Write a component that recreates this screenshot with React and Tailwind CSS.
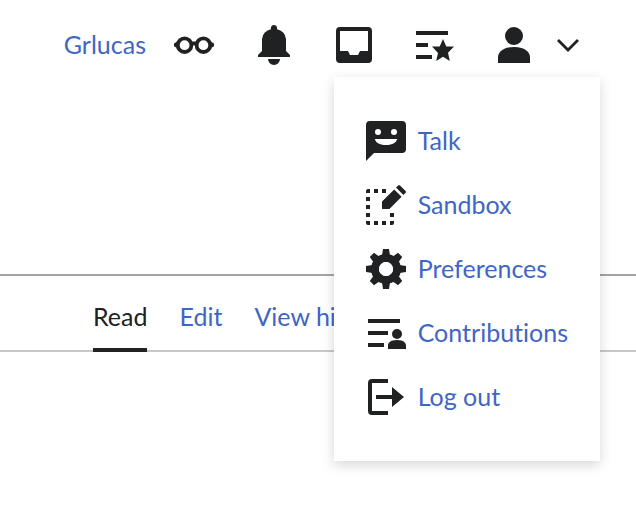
const Icon = ({ children }) => (
    <svg className="w-10 h-10 shrink-0 fill-[#202122]" viewBox="0 0 20 20" aria-hidden="true">
        {children}
    </svg>
);

const GlassesIcon = () => (
    <Icon>
        <g fill="none" stroke="#202122" strokeWidth="1.9">
            <circle cx="5.3" cy="10.1" r="3.4" />
            <circle cx="14.7" cy="10.1" r="3.4" />
            <path d="M8.2 9.5q1.8-.7 3.6 0" />
        </g>
        <path d="M2.4 7.9 0 9.3v1.3l2 1.2zM17.6 7.9l2.4 1.4v1.3l-2 1.2z" />
    </Icon>
);

const BellIcon = () => (
    <Icon>
        <path d="M16 7a5.38 5.38 0 0 0-4.46-4.85C11.6 1.46 11.53 0 10 0S8.4 1.46 8.46 2.15A5.38 5.38 0 0 0 4 7v6l-2 2v1h16v-1l-2-2zm-6 13a3 3 0 0 0 3-3H7a3 3 0 0 0 3 3" />
    </Icon>
);

const TrayIcon = () => (
    <Icon>
        <path d="M3 1a2 2 0 0 0-2 2v14a2 2 0 0 0 2 2h14a2 2 0 0 0 2-2V3a2 2 0 0 0-2-2zm14 12h-4l-1 2H8l-1-2H3V3h14z" />
    </Icon>
);

const WatchlistIcon = () => (
    <Icon>
        <path d="M1 3h16v2H1zm0 6h6v2H1zm0 6h8v2H1zm8-4.24h3.85L14.5 7l1.65 3.76H20l-3 3.17.9 4.05-3.4-2.14L11.1 18l.9-4.05z" />
    </Icon>
);

const UserIcon = () => (
    <Icon>
        <path d="M10 11c-5.92 0-8 3-8 5v3h16v-3c0-2-2.08-5-8-5" />
        <circle cx="10" cy="5.5" r="4.5" />
    </Icon>
);

const TalkIcon = () => (
    <Icon>
        <path
            fillRule="evenodd"
            d="M18 0H2a2 2 0 0 0-2 2v18l4-4h14a2 2 0 0 0 2-2V2a2 2 0 0 0-2-2m-4 4a1.5 1.5 0 1 1 0 3 1.5 1.5 0 0 1 0-3M6 4a1.5 1.5 0 1 1 0 3 1.5 1.5 0 0 1 0-3m4 8c-2.61 0-4.83-.67-5.65-3h11.3c-.82 2.33-3.04 3-5.65 3"
        />
    </Icon>
);

const SandboxIcon = () => (
    <Icon>
        <path d="M2 2v2H0V3a1 1 0 0 1 1-1zM4 2h2v2H4zM8 2h2v2H8zM0 6h2v2H0zM0 10h2v2H0zM0 14h2v2H0zM12 14h2v2h-2zM0 18h2v2H1a1 1 0 0 1-1-1zM4 18h2v2H4zM8 18h2v2H8zM12 18h2v1a1 1 0 0 1-1 1h-1z" />
        <path d="M8 8.3 14.1 2.2l3.7 3.7L11.7 12H8zM15 1.3 16.1.2a.7.7 0 0 1 .9 0L19.8 3a.7.7 0 0 1 0 .9L18.7 5z" />
    </Icon>
);

const SettingsIcon = () => (
    <Icon>
        <g transform="translate(10 10)">
            {[0, 45, 90, 135, 180, 225, 270, 315].map((angle) => (
                <path key={angle} d="M-1.5-10h3l1 6.5h-5" transform={`rotate(${angle})`} />
            ))}
        </g>
        <path d="M10 2.5a7.5 7.5 0 0 0 0 15 7.5 7.5 0 0 0 0-15v4a3.5 3.5 0 0 1 0 7 3.5 3.5 0 0 1 0-7" />
        <circle cx="10" cy="10" r="3.5" className="fill-white" />
    </Icon>
);

const ContributionsIcon = () => (
    <Icon>
        <path d="M1 3h16v2H1zm0 6h10v2H1zm0 6h8v2H1zM15.5 13.5c-3.4 0-4.5 1.6-4.5 2.6V18h9v-1.9c0-1-1.1-2.6-4.5-2.6" />
        <circle cx="15.5" cy="10.5" r="2.5" />
    </Icon>
);

const LogOutIcon = () => (
    <Icon>
        <path d="M3 3h8V1H3a2 2 0 0 0-2 2v14a2 2 0 0 0 2 2h8v-2H3z" />
        <path d="M13 5v4H5v2h8v4l6-5z" />
    </Icon>
);

const tools = [
    { label: "Alerts", icon: BellIcon },
    { label: "Notices", icon: TrayIcon },
    { label: "Watchlist", icon: WatchlistIcon },
];

const menuItems = [
    { label: "Talk", icon: TalkIcon },
    { label: "Sandbox", icon: SandboxIcon },
    { label: "Preferences", icon: SettingsIcon },
    { label: "Contributions", icon: ContributionsIcon },
    { label: "Log out", icon: LogOutIcon },
];

const UserMenu = () => (
    <div className="relative">
        <button className="flex items-center gap-5" aria-label="Personal tools" aria-expanded="true">
            <UserIcon />
            <svg className="w-7 h-7 fill-none stroke-[#202122]" viewBox="0 0 28 28" aria-hidden="true">
                <path d="M4 9l10 10L24 9" strokeWidth="2.8" />
            </svg>
        </button>
        <ul className="absolute z-10 top-full right-0 mt-3 -mr-4.5 p-8 w-max bg-white shadow-[0_4px_12px_rgba(0,0,0,0.16)]">
            {menuItems.map(({ label, icon: ItemIcon }) => (
                <li key={label}>
                    <a href="#" className="flex items-center gap-3 h-16">
                        <ItemIcon />
                        <span className="pb-0.5">{label}</span>
                    </a>
                </li>
            ))}
        </ul>
    </div>
);

const App = () => {
    return (
        <div className="min-h-screen overflow-hidden bg-white font-['Lato',sans-serif] [font-variant-ligatures:none] text-[25px] leading-10 text-[#3f66c4]">
            <header className="flex items-center justify-end gap-10 pt-6 pr-13.5">
                <div className="flex items-center gap-7">
                    <a href="#" className="pb-0.5">Grlucas</a>
                    <button aria-label="Appearance">
                        <GlassesIcon />
                    </button>
                </div>
                {tools.map(({ label, icon: ToolIcon }) => (
                    <button key={label} aria-label={label}>
                        <ToolIcon />
                    </button>
                ))}
                <UserMenu />
            </header>

            <nav className="flex gap-8 mt-52 pl-[93px] border-t-2 border-t-[#a2a2aa] border-b-2 border-b-[#c8c8cc] whitespace-nowrap">
                <a href="#" className="-mb-0.5 pt-5 pb-3 border-b-4 border-[#202122] text-[#202122]">
                    Read
                </a>
                <a href="#" className="pt-5">Edit</a>
                <a href="#" className="pt-5">View history</a>
            </nav>
        </div>
    );
};

export default App;
